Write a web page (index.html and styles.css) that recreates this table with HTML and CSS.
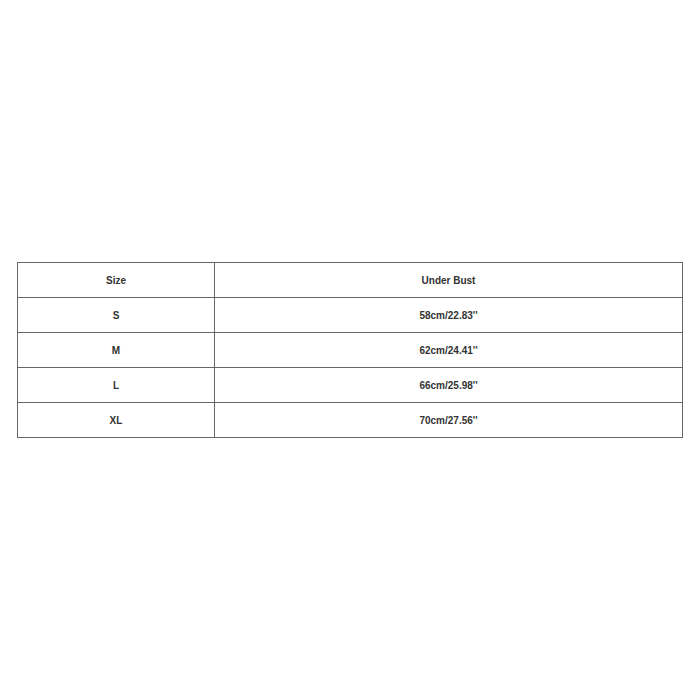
FILE: index.html
```html
<!DOCTYPE html>
<html>
<head>
<meta charset="utf-8">
<link rel="stylesheet" href="styles.css">
</head>
<body>
<div class="page">
<table class="sizes">
<tr><td class="c1">Size</td><td class="c2">Under Bust</td></tr>
<tr><td class="c1">S</td><td class="c2">58cm/22.83''</td></tr>
<tr><td class="c1">M</td><td class="c2">62cm/24.41''</td></tr>
<tr><td class="c1">L</td><td class="c2">66cm/25.98''</td></tr>
<tr><td class="c1">XL</td><td class="c2">70cm/27.56''</td></tr>
</table>
</div>
</body>
</html>
```
FILE: styles.css
```css
html, body { margin: 0; padding: 0; background: #fff; }
.page { width: 700px; height: 700px; padding: 262px 0 0 17px; box-sizing: border-box; }
.sizes {
  border-collapse: collapse;
  width: 666px;
  font-family: "Liberation Sans", Arial, sans-serif;
  font-weight: bold;
  font-size: 10px;
  color: #333;
}
.sizes td {
  border: 1.5px solid #666;
  height: 34px;
  padding: 0;
  text-align: center;
  vertical-align: middle;
}
.c1 { width: 196px; }
```
